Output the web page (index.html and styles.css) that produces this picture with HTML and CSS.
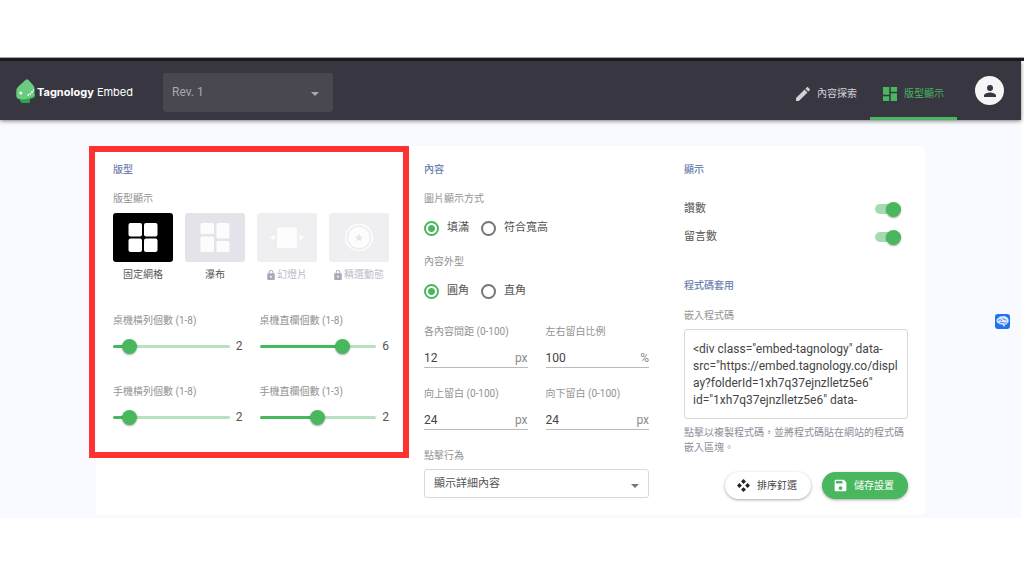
FILE: index.html
```
<!DOCTYPE html>
<html lang="zh-Hant">
<head>
<meta charset="utf-8">
<meta name="viewport" content="width=device-width, initial-scale=1">
<title>Tagnology Embed</title>
<link rel="stylesheet" href="styles.css">
</head>
<body>
<div class="window-edge"></div>
<div class="app">
  <header class="topbar">
    <a class="brand" href="#">
      <svg class="brand-mark" viewBox="0 0 19 24" aria-hidden="true">
        <path fill="#3fae56" d="M1 15h18v1.500q0 2-1.500 2.500l-3.500 1v2.500q-.5 1.500-2 1.500H6.500q-2-.5-2.500-3.500Q.5 20 .3 17z"/>
        <path fill="#6bcb80" d="M11 .3q.8 0 1.500.7L17 6q1.500 1.500 1.500 3.500V16q-1 1.500-4 2.500-3.500 2-8 2Q.3 20 .3 16v-4q0-2.500 2-4.500L9.500 1q.7-.7 1.500-.7z"/>
        <path fill="#2fa34a" d="M4 20.500q6 1 10-1V22.500q-.5 1.500-2 1.500H6.500Q4.300 23.500 4 20.500z"/>
        <circle cx="4.800" cy="14" r="1.500" fill="#fff"/>
        <g fill="#fff"><circle cx="12.300" cy="16" r=".9"/><circle cx="14.300" cy="14.800" r=".9"/><circle cx="16" cy="13" r=".9"/><circle cx="17.500" cy="11" r=".8"/></g>
      </svg>
      <span class="brand-name"><b>Tagnology</b> Embed</span>
    </a>
    <div class="select revision">
      <select aria-label="Revision"><option>Rev. 1</option></select>
      <svg class="caret" viewBox="0 0 8 4" aria-hidden="true"><path d="M0 0h8L4 4z"/></svg>
    </div>
    <nav class="tabs">
      <a class="tab" href="#">
        <svg viewBox="3 3 18 18" aria-hidden="true"><path d="M3 17.250V21h3.750L17.810 9.940l-3.750-3.750L3 17.250zM20.710 7.040a1 1 0 0 0 0-1.410l-2.340-2.340a1 1 0 0 0-1.410 0l-1.830 1.830 3.750 3.750 1.830-1.830z"/></svg>
        內容探索
      </a>
      <a class="tab tab-active" href="#" aria-current="page">
        <svg viewBox="3 3 18 18" aria-hidden="true"><path d="M3 13h8V3H3v10zm0 8h8v-6H3v6zm10 0h8V11h-8v10zm0-18v6h8V3h-8z"/></svg>
        版型顯示
      </a>
    </nav>
    <button class="avatar" type="button" aria-label="Account">
      <svg viewBox="4 4 16 16" aria-hidden="true"><path d="M12 12a4 4 0 1 0 0-8 4 4 0 0 0 0 8zm0 2c-2.670 0-8 1.340-8 4v2h16v-2c0-2.660-5.330-4-8-4z"/></svg>
    </button>
  </header>

  <main class="page">
    <form class="panel">
      <section class="col layout-col">
        <h2>版型</h2>
        <div class="label">版型顯示</div>
        <div class="tiles">
          <button class="tile tile-selected" type="button" aria-pressed="true">
            <span class="tile-art"><svg viewBox="0 0 60 49" aria-hidden="true"><rect x="15.500" y="10" width="13.500" height="13.500" rx="2"/><rect x="31" y="10" width="13.500" height="13.500" rx="2"/><rect x="15.500" y="25.500" width="13.500" height="13.500" rx="2"/><rect x="31" y="25.500" width="13.500" height="13.500" rx="2"/></svg></span>
            <span class="tile-name">固定網格</span>
          </button>
          <button class="tile" type="button" aria-pressed="false">
            <span class="tile-art"><svg viewBox="0 0 60 49" aria-hidden="true"><rect x="15.500" y="10" width="13.500" height="11" rx="1.500"/><rect x="31.500" y="10" width="13" height="15.500" rx="1.500"/><rect x="15.500" y="23.500" width="13.500" height="15.500" rx="1.500"/><rect x="31.500" y="28" width="13" height="11" rx="1.500"/></svg></span>
            <span class="tile-name">瀑布</span>
          </button>
          <button class="tile" type="button" disabled>
            <span class="tile-art"><svg viewBox="0 0 60 49" aria-hidden="true"><rect x="20" y="14.500" width="20" height="20.500" rx="1.500"/><path d="M17.500 21.500v6L13 24.500zM42.500 21.500v6l4.500-3z"/></svg></span>
            <span class="tile-name"><svg class="lock" viewBox="4 1 16 21" aria-hidden="true"><path fill-rule="evenodd" d="M18 8h-1V6A5 5 0 0 0 7 6v2H6a2 2 0 0 0-2 2v10c0 1.100.9 2 2 2h12a2 2 0 0 0 2-2V10a2 2 0 0 0-2-2zm-6 9a2 2 0 1 1 0-4 2 2 0 0 1 0 4zM9 8V6a3 3 0 0 1 6 0v2z"/></svg>幻燈片</span>
          </button>
          <button class="tile" type="button" disabled>
            <span class="tile-art"><svg viewBox="0 0 60 49" aria-hidden="true"><circle cx="30" cy="24.500" r="13.200" fill="none" stroke="#fff" stroke-width="1.500"/><circle cx="30" cy="24.500" r="10.500"/><path fill="#e6e6ea" d="m30 20.500 1.200 2.700 2.900.3-2.200 1.900.7 2.900-2.600-1.500-2.600 1.500.7-2.900-2.200-1.900 2.900-.3z"/></svg></span>
            <span class="tile-name"><svg class="lock" viewBox="4 1 16 21" aria-hidden="true"><path fill-rule="evenodd" d="M18 8h-1V6A5 5 0 0 0 7 6v2H6a2 2 0 0 0-2 2v10c0 1.100.9 2 2 2h12a2 2 0 0 0 2-2V10a2 2 0 0 0-2-2zm-6 9a2 2 0 1 1 0-4 2 2 0 0 1 0 4zM9 8V6a3 3 0 0 1 6 0v2z"/></svg>精選動態</span>
          </button>
        </div>
        <div class="sliders">
          <div class="slider-field">
            <label class="label" for="desk-rows">桌機橫列個數 (1-8)</label>
            <div class="slider-row"><div class="slider" style="--fill: 14.300%"><input id="desk-rows" type="range" min="1" max="8" value="2"></div><output for="desk-rows">2</output></div>
          </div>
          <div class="slider-field">
            <label class="label" for="desk-cols">桌機直欄個數 (1-8)</label>
            <div class="slider-row"><div class="slider" style="--fill: 71.400%"><input id="desk-cols" type="range" min="1" max="8" value="6"></div><output for="desk-cols">6</output></div>
          </div>
          <div class="slider-field">
            <label class="label" for="phone-rows">手機橫列個數 (1-8)</label>
            <div class="slider-row"><div class="slider" style="--fill: 14.300%"><input id="phone-rows" type="range" min="1" max="8" value="2"></div><output for="phone-rows">2</output></div>
          </div>
          <div class="slider-field">
            <label class="label" for="phone-cols">手機直欄個數 (1-3)</label>
            <div class="slider-row"><div class="slider" style="--fill: 50%"><input id="phone-cols" type="range" min="1" max="3" value="2"></div><output for="phone-cols">2</output></div>
          </div>
        </div>
        <div class="highlight"></div>
      </section>

      <section class="col">
        <h2>內容</h2>
        <div class="label" id="fit-label">圖片顯示方式</div>
        <div class="radios" role="radiogroup" aria-labelledby="fit-label">
          <label><input type="radio" name="fit" checked>填滿</label>
          <label><input type="radio" name="fit">符合寬高</label>
        </div>
        <div class="label shape-label" id="shape-label">內容外型</div>
        <div class="radios" role="radiogroup" aria-labelledby="shape-label">
          <label><input type="radio" name="shape" checked>圓角</label>
          <label><input type="radio" name="shape">直角</label>
        </div>
        <div class="numbers">
          <div><label class="label" for="gap">各內容間距 (0-100)</label><div class="number"><input id="gap" type="text" inputmode="numeric" value="12"><span>px</span></div></div>
          <div><label class="label" for="side">左右留白比例</label><div class="number"><input id="side" type="text" inputmode="numeric" value="100"><span>%</span></div></div>
          <div><label class="label" for="top">向上留白 (0-100)</label><div class="number"><input id="top" type="text" inputmode="numeric" value="24"><span>px</span></div></div>
          <div><label class="label" for="bottom">向下留白 (0-100)</label><div class="number"><input id="bottom" type="text" inputmode="numeric" value="24"><span>px</span></div></div>
        </div>
        <label class="label click-label" for="click">點擊行為</label>
        <div class="select click-action">
          <select id="click"><option>顯示詳細內容</option></select>
          <svg class="caret" viewBox="0 0 8 4" aria-hidden="true"><path d="M0 0h8L4 4z"/></svg>
        </div>
      </section>

      <section class="col">
        <h2>顯示</h2>
        <div class="toggles">
          <label>讚數<input type="checkbox" role="switch" checked></label>
          <label>留言數<input type="checkbox" role="switch" checked></label>
        </div>
        <h2>程式碼套用</h2>
        <label class="label code-label" for="code">嵌入程式碼</label>
        <textarea id="code" readonly>&lt;div class="embed-tagnology" data-
src="https://embed.tagnology.co/displ
ay?folderId=1xh7q37ejnzlletz5e6"
id="1xh7q37ejnzlletz5e6" data-</textarea>
        <p class="hint">點擊以複製程式碼，並將程式碼貼在網站的程式碼嵌入區塊。</p>
        <div class="actions">
          <button class="btn" type="button"><svg viewBox="0 0 24 24" aria-hidden="true"><path d="m12 0 4.500 4.500L12 9 7.500 4.500zM12 15l4.500 4.500L12 24l-4.500-4.500zM4.500 7.500 9 12l-4.500 4.500L0 12zM19.500 7.500 24 12l-4.500 4.500L15 12z"/></svg>排序釘選</button>
          <button class="btn btn-primary" type="button"><svg viewBox="2 2 20 20" aria-hidden="true"><path d="M17 3H5a2 2 0 0 0-2 2v14c0 1.100.9 2 2 2h14c1.100 0 2-.9 2-2V7l-4-4zm-5 16a3 3 0 1 1 0-6 3 3 0 0 1 0 6zm3-10H5V5h10v4z"/></svg>儲存設置</button>
        </div>
      </section>
    </form>
    <button class="assistant" type="button" aria-label="Assistant">
      <svg viewBox="0 0 16 16" aria-hidden="true">
        <path fill="#dbe9ff" d="M1.500 7q0-2.500 2.500-3.300Q5.500 1.800 8 2.500q2.500-.9 4 .7 2.500.7 2.500 3.300.7 2.500-1.500 3.500-.5 1.500-2.500 1.500L10 14l-2.500-3q-3 .5-3.500-1Q1.500 9.500 1.500 7z"/>
        <path fill="none" stroke="#2370f0" stroke-width=".9" d="M3 7q2.500-2 4.500 0M8 4q0 2 4 2.500M5 9.500q2.500-1.500 4 0t3.500-1"/>
      </svg>
    </button>
  </main>
</div>
</body>
</html>
```
FILE: styles.css
```
* { box-sizing: border-box; }

body {
  margin: 0;
  padding: 57px 0;
  background: #fff;
  color: #555;
  font: 11px/16px Roboto, "Noto Sans CJK TC", sans-serif;
}

button, input, select, textarea {
  margin: 0;
  padding: 0;
  border: 0;
  background: none;
  color: inherit;
  font: inherit;
}

input, select, textarea { min-width: 0; appearance: none; outline: 0; }

svg { display: block; fill: currentColor; }

.window-edge {
  height: 4px;
  border-top: 1px solid #aaa;
  background: #1d1d1d;
}

.app { margin-right: 3px; }

/* Top bar */
.topbar {
  position: relative;
  z-index: 1;
  display: flex;
  align-items: center;
  height: 59px;
  padding: 0 17px 0 16px;
  background: #373641;
  box-shadow: 0 1px 4px rgba(0, 0, 0, .5);
}

.brand {
  display: flex;
  align-items: center;
  gap: 2px;
  width: 147px;
  color: #fff;
  text-decoration: none;
}

.brand-mark { width: 19px; height: 24px; }

.brand-name {
  padding-top: 2px;
  font: 11px/16px Inter, sans-serif;
  white-space: nowrap;
}

.select { position: relative; display: grid; }
.select select { width: 100%; }

.caret {
  position: absolute;
  top: 50%;
  right: 9px;
  width: 8px;
  height: 4px;
  pointer-events: none;
}

.revision {
  width: 170px;
  height: 39px;
  margin-top: 3px;
  border-radius: 3px;
  background: #494850;
  color: #a9a8ad;
  font-size: 12px;
}

.revision select { padding: 0 9px; }
.revision .caret { right: 14px; }

.tabs {
  display: flex;
  align-self: stretch;
  margin-left: auto;
}

.tab {
  display: flex;
  align-items: center;
  gap: 7px;
  padding: 9px 13px 0;
  border-bottom: 3px solid transparent;
  color: #d0d0d3;
  font-size: 10px;
  text-decoration: none;
}

.tab svg { width: 14px; height: 14px; }
.tab-active { border-color: #49b75e; color: #49b75e; }

.avatar {
  display: grid;
  place-items: center;
  width: 29px;
  height: 29px;
  margin-left: 18px;
  border-radius: 50%;
  background: #f5f5f5;
  color: #373641;
}

.avatar svg { width: 12px; height: 12px; }

/* Settings panel */
.page {
  position: relative;
  padding: 26px 96px 3px;
  background: #f9faff;
}

.panel {
  display: grid;
  grid-template-columns: 276fr 225fr 224fr;
  gap: 35px;
  padding: 16px 17px;
  border-radius: 4px;
  background: #fff;
}

.col { min-width: 0; }

h2 {
  margin: 0 0 13px;
  color: #6b82b0;
  font-size: 10px;
  font-weight: 500;
  line-height: 16px;
}

.label {
  display: block;
  color: #929292;
  font-size: 10px;
  white-space: nowrap;
}

/* Layout column */
.layout-col { position: relative; }

.highlight {
  position: absolute;
  inset: -16px -20px auto -24px;
  height: 312px;
  border: 6px solid #ff3131;
  pointer-events: none;
}

.tiles {
  display: grid;
  grid-template-columns: repeat(4, 1fr);
  gap: 12px;
  margin-top: 6px;
}

.tile { display: grid; gap: 5px; }

.tile-art {
  display: block;
  border-radius: 3px;
  background: #e4e3ea;
  color: #fff;
}

.tile-art svg { width: 100%; opacity: .9; }
.tile-selected .tile-art { background: #000; }
.tile-selected svg { opacity: 1; }
.tile:disabled .tile-art { background: #efeff1; }

.tile-name {
  display: flex;
  align-items: center;
  justify-content: center;
  gap: 2px;
  color: #555;
  font-size: 10px;
  white-space: nowrap;
}

.tile:disabled .tile-name { color: #bcbbc9; }
.lock { width: 8px; height: 10px; color: #aaa9bb; }

.sliders {
  display: grid;
  grid-template-columns: 1fr 1fr;
  gap: 30px 17px;
  margin-top: 30px;
}

.slider-row {
  display: flex;
  align-items: center;
  gap: 6px;
  margin-top: 9px;
  font-size: 12px;
}

.slider {
  flex: 1;
  display: flex;
  align-items: center;
  height: 3px;
  border-radius: 2px;
  background: linear-gradient(to right, #49b75e var(--fill), #b6e2bf var(--fill));
}

/* The input overhangs the track so that the thumb is centred on its ends. */
.slider input {
  flex: 1;
  height: 15px;
  margin: 0 -7px 0 -8px;
}

.slider input::-webkit-slider-thumb {
  appearance: none;
  width: 15px;
  height: 15px;
  border-radius: 50%;
  background: #49b75e;
  box-shadow: 0 1px 2px rgba(0, 0, 0, .35);
}

/* Content column */
.radios {
  display: flex;
  gap: 12px;
  margin-top: 13px;
}

.radios label { display: flex; align-items: center; gap: 8px; }

.radios input {
  width: 15px;
  height: 15px;
  border: 2px solid #757575;
  border-radius: 50%;
}

.radios input:checked {
  border-color: #49b75e;
  background: radial-gradient(circle, #49b75e 3px, transparent 4px);
}

.shape-label { margin-top: 18px; }

.numbers {
  display: grid;
  grid-template-columns: 1fr 1fr;
  gap: 18px;
  margin-top: 25px;
}

.number {
  display: flex;
  height: 20px;
  margin-top: 8px;
  border-bottom: 1px solid #bbb;
  color: #444;
  font-size: 12px;
}

.number input { flex: 1; width: 0; }
.number span { align-self: center; color: #8b8b8b; }

.click-label { margin-top: 18px; }

.click-action {
  height: 29px;
  margin-top: 5px;
  border: 1px solid #d8d8d8;
  border-radius: 3px;
}

.click-action select { padding: 0 9px; }
.click-action .caret { color: #757575; }

/* Display column */
.toggles {
  display: grid;
  gap: 12px;
  margin: 23px 0 33px;
}

.toggles label {
  display: flex;
  align-items: center;
  justify-content: space-between;
}

.toggles input {
  display: flex;
  align-items: center;
  justify-content: flex-end;
  width: 26px;
  height: 10px;
  margin-right: 7px;
  border-radius: 5px;
  background: #a4dbaf;
}

.toggles input::before {
  content: "";
  width: 15px;
  height: 15px;
  border-radius: 50%;
  background: #49b75e;
  box-shadow: 0 1px 2px rgba(0, 0, 0, .35);
}

.code-label { margin-top: 14px; }

textarea {
  display: block;
  width: 100%;
  height: 90px;
  margin-top: 5px;
  padding: 11px 8px;
  border: 1px solid #d8d8d8;
  border-radius: 3px;
  color: #444;
  font-size: 12px;
  line-height: 17px;
  white-space: pre;
  resize: none;
  overflow: hidden;
}

.hint {
  margin: 6px 0 17px;
  color: #8d8c98;
  font-size: 10px;
  line-height: 15px;
}

.actions {
  display: flex;
  justify-content: flex-end;
  gap: 11px;
}

.btn {
  display: flex;
  align-items: center;
  gap: 7px;
  height: 27px;
  padding: 0 14px 0 12px;
  border-radius: 14px;
  background: #fff;
  box-shadow: 0 1px 3px rgba(0, 0, 0, .35);
  color: #444;
  font-size: 10px;
}

.btn svg { width: 13px; height: 13px; color: #222; }
.btn-primary { background: #49b75e; color: #fff; }
.btn-primary svg { color: #fff; }

.assistant {
  position: absolute;
  top: 194px;
  right: 11px;
  width: 15px;
  height: 15px;
  border-radius: 3px;
  background: #2370f0;
}
```
